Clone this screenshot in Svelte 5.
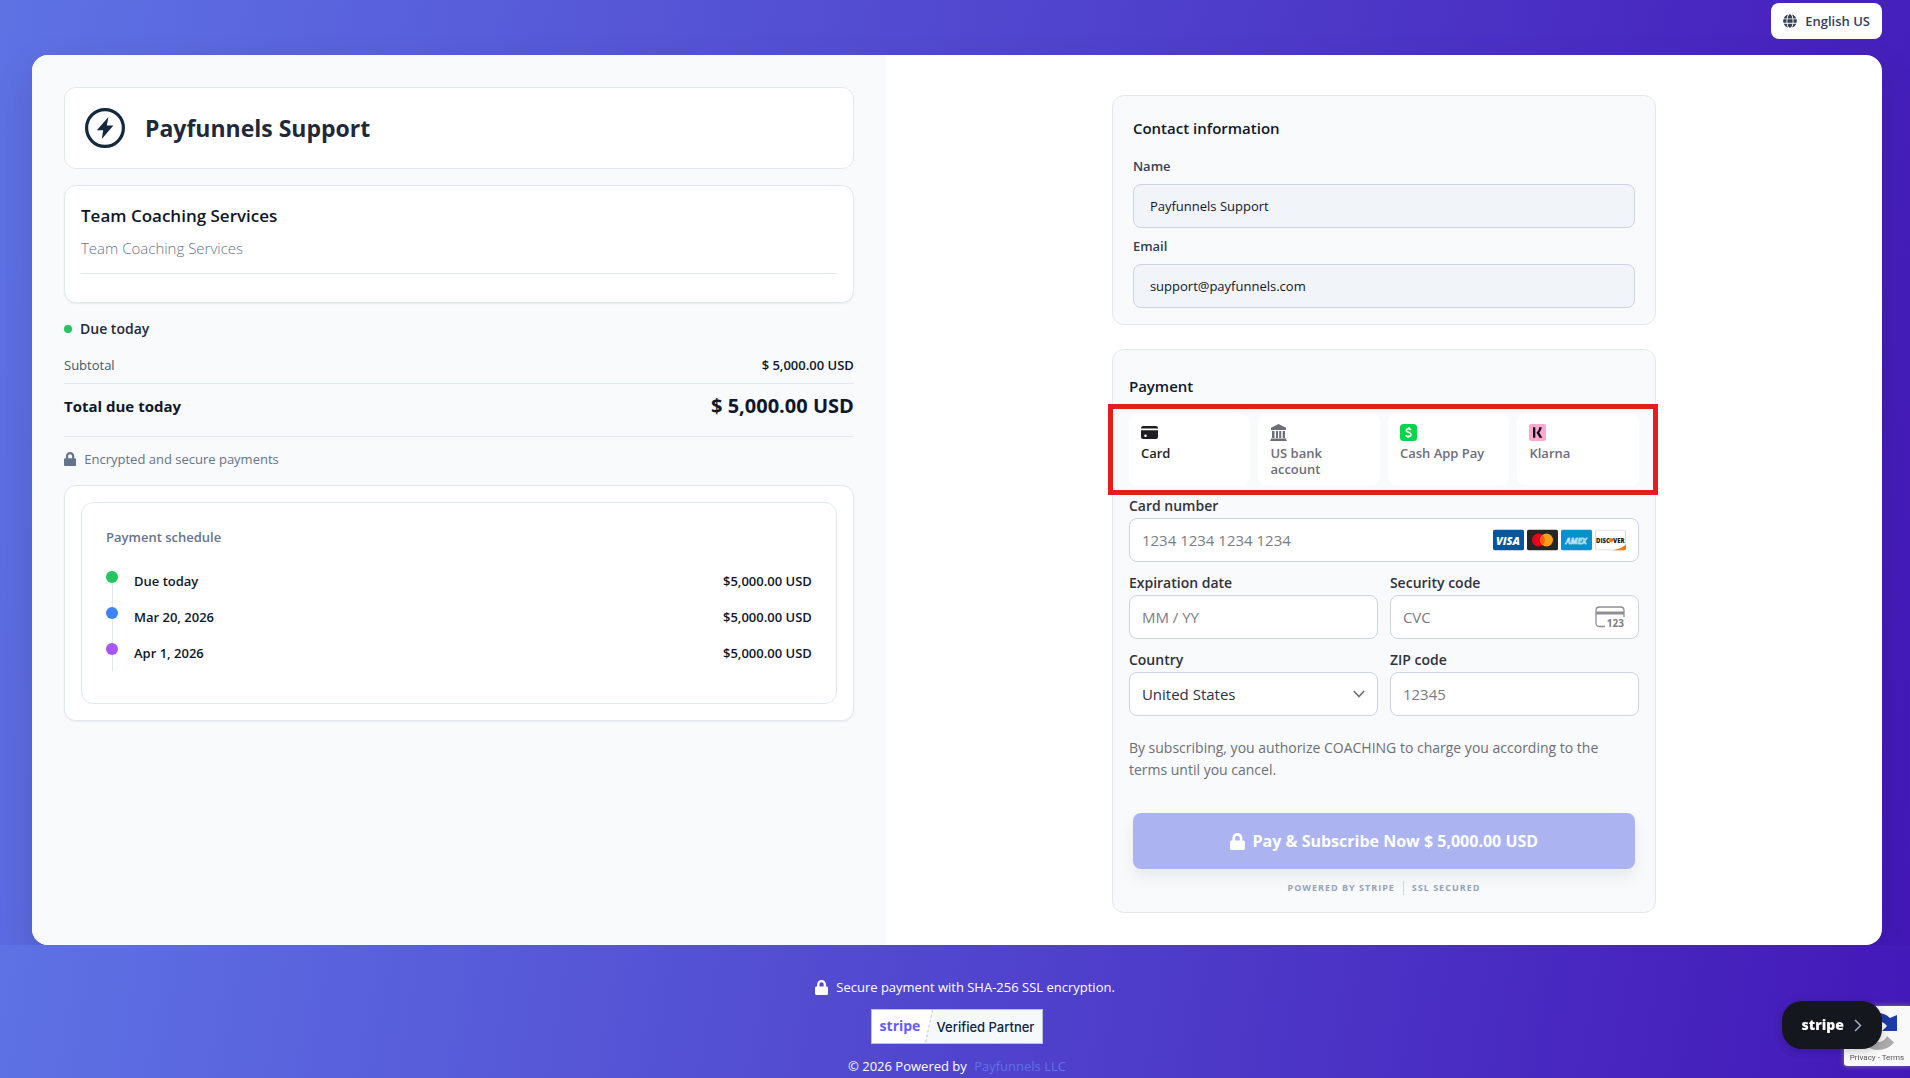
<script lang="ts">
  interface Installment {
    label: string;
    amount: string;
    tone: "green" | "blue" | "purple";
  }

  const schedule: Installment[] = [
    { label: "Due today", amount: "$5,000.00 USD", tone: "green" },
    { label: "Mar 20, 2026", amount: "$5,000.00 USD", tone: "blue" },
    { label: "Apr 1, 2026", amount: "$5,000.00 USD", tone: "purple" },
  ];

  const methods = [
    { id: "card", label: "Card" },
    { id: "bank", label: "US bank account" },
    { id: "cashapp", label: "Cash App Pay" },
    { id: "klarna", label: "Klarna" },
  ];

  let selected = $state("card");
  let name = $state("Payfunnels Support");
  let email = $state("support@payfunnels.com");
  let country = $state("US");
</script>

{#snippet lock(size: number)}
  <svg class="lock" height={size} viewBox="0 0 448 512" fill="currentColor" aria-hidden="true">
    <path d="M400 224h-24v-72C376 68.2 307.8 0 224 0S72 68.2 72 152v72H48c-26.5 0-48 21.5-48 48v192c0 26.5 21.5 48 48 48h352c26.5 0 48-21.5 48-48V272c0-26.5-21.5-48-48-48zm-104 0H152v-72c0-39.7 32.3-72 72-72s72 32.3 72 72v72z" />
  </svg>
{/snippet}

<div class="page">
  <div class="top">
    <nav class="topbar">
      <button class="lang" type="button">
        <svg width="14" height="14" viewBox="0 0 496 512" fill="currentColor" aria-hidden="true">
          <path d="M336.5 160C322 70.7 287.8 8 248 8s-74 62.7-88.5 152h177zM152 256c0 22.2 1.2 43.5 3.3 64h185.3c2.1-20.5 3.3-41.8 3.3-64s-1.2-43.5-3.3-64H155.3c-2.1 20.5-3.3 41.8-3.3 64zm324.7-96c-28.6-67.9-86.5-120.4-158-141.6 24.4 33.8 41.2 84.7 50 141.6h108zM177.2 18.4C105.8 39.6 47.8 92.1 19.3 160h108c8.7-56.9 25.5-107.8 49.9-141.6zM487.4 192H372.7c2.1 21 3.3 42.5 3.3 64s-1.2 43-3.3 64h114.6c5.5-20.5 8.6-41.8 8.6-64s-3.1-43.5-8.5-64zM120 256c0-21.5 1.2-43 3.3-64H8.6C3.2 212.5 0 233.8 0 256s3.2 43.5 8.6 64h114.6c-2-21-3.2-42.5-3.2-64zm39.5 96c14.5 89.3 48.7 152 88.5 152s74-62.7 88.5-152h-177zm159.3 141.6c71.4-21.2 129.4-73.7 158-141.6h-108c-8.8 56.9-25.6 107.8-50 141.6zM19.3 352c28.6 67.9 86.5 120.4 158 141.6-24.4-33.8-41.2-84.7-50-141.6h-108z" />
        </svg>
        English US
      </button>
    </nav>

    <main class="checkout">
      <section class="summary">
        <header class="box brand">
          <svg width="40" height="40" viewBox="0 0 40 40" aria-hidden="true">
            <circle cx="20" cy="20" r="18.4" fill="none" stroke="#14293d" stroke-width="3.2" />
            <path d="M23.4 9 11.8 22.2h6.4L16.8 31 28.4 17.6h-6.6z" fill="#14293d" />
          </svg>
          <h1>Payfunnels Support</h1>
        </header>

        <div class="box product">
          <h2>Team Coaching Services</h2>
          <p>Team Coaching Services</p>
          <hr />
        </div>

        <div class="due"><span class="due-dot"></span>Due today</div>

        <div class="row subtotal">
          <span>Subtotal</span>
          <strong>$ 5,000.00 USD</strong>
        </div>
        <div class="row total">
          <span>Total due today</span>
          <strong>$ 5,000.00 USD</strong>
        </div>

        <p class="encrypted">{@render lock(14)} Encrypted and secure payments</p>

        <div class="box schedule">
          <div class="schedule-inner">
            <h3>Payment schedule</h3>
            <ol>
              {#each schedule as item}
                <li>
                  <span class="marker {item.tone}"></span>
                  <span class="when">{item.label}</span>
                  <span>{item.amount}</span>
                </li>
              {/each}
            </ol>
          </div>
        </div>
      </section>

      <section class="forms">
        <form class="panel contact">
          <h2>Contact information</h2>
          <label for="name">Name</label>
          <input id="name" type="text" bind:value={name} />
          <label for="email">Email</label>
          <input id="email" type="email" bind:value={email} />
        </form>

        <form class="panel payment">
          <h2>Payment</h2>

          <div class="methods">
            {#each methods as m}
              <button type="button" class="method" class:active={selected === m.id} onclick={() => (selected = m.id)}>
                <svg width="17" height="17" viewBox="0 0 17 17" aria-hidden="true">
                  {#if m.id === "card"}
                    <path d="M0 4.2Q0 2 2 2h13q2 0 2 2.2v.4H0z" fill="currentColor" />
                    <path fill-rule="evenodd" d="M0 6.2h17V13q0 2-2 2H2q-2 0-2-2zM4.5 10.4a1.3 1.3 0 1 0 0 2.6 1.3 1.3 0 0 0 0-2.6z" fill="currentColor" />
                  {:else if m.id === "bank"}
                    <path fill-rule="evenodd" d="M8.5 0 16 3.8V6H1V3.8zM2 7h2.5v7H2zm4 0h2v7H6zm3.2 0h2v7h-2zm3.5 0h2.3v7h-2.3zM1 14.5h15V15l1 2H0l1-2z" fill="currentColor" />
                  {:else if m.id === "cashapp"}
                    <rect width="17" height="17" rx="3.5" fill="#00d54b" />
                    <path d="M11 5.9Q9.9 4.9 8.5 4.9C7.1 4.9 6.3 5.6 6.3 6.5c0 2.3 4.7 1.3 4.7 3.9 0 1.3-1.2 2-2.5 2q-1.6 0-2.9-1.1M9.1 3.2 8.8 5M8.1 12.2l-.4 1.7" fill="none" stroke="#fff" stroke-width="1.7" />
                  {:else}
                    <rect width="17" height="17" rx="2" fill="#ffa8cd" />
                    <path d="M4 3.2h2.3v10.6H4zM10.2 3.2h2.4c0 2-.9 3.9-2.4 5.2l3.2 5.4h-2.8L7.4 8.5c1.8-1.3 2.8-3.2 2.8-5.3z" fill="#0b051d" />
                  {/if}
                </svg>
                <span>{m.label}</span>
              </button>
            {/each}
            <div class="highlight"></div>
          </div>

          <div class="fields">
            <div class="field wide">
              <label for="number">Card number</label>
              <div class="control">
                <input id="number" type="text" inputmode="numeric" placeholder="1234 1234 1234 1234" />
                <div class="adorn brands" aria-hidden="true">
                  <svg width="31" height="21" viewBox="0 0 31 21">
                    <rect width="31" height="21" rx="2" fill="#00579f" />
                    <text x="15" y="15" text-anchor="middle" font-size="11" font-weight="800" font-style="italic" fill="#fff">VISA</text>
                  </svg>
                  <svg width="31" height="21" viewBox="0 0 31 21">
                    <rect width="31" height="21" rx="2" fill="#252525" />
                    <circle cx="11.5" cy="10.5" r="6.5" fill="#eb001b" />
                    <circle cx="19.5" cy="10.5" r="6.5" fill="#f79e1b" />
                    <path d="M15.5 5.4a6.5 6.5 0 0 1 0 10.2 6.5 6.5 0 0 1 0-10.2z" fill="#ff5f00" />
                  </svg>
                  <svg width="31" height="21" viewBox="0 0 31 21">
                    <rect width="31" height="21" rx="2" fill="#0690d0" />
                    <text x="15" y="14" text-anchor="middle" font-size="8" font-weight="700" font-style="italic" fill="#7cc4e8" stroke="#fff" stroke-width=".4">AMEX</text>
                  </svg>
                  <svg width="31" height="21" viewBox="0 0 31 21">
                    <rect x=".5" y=".5" width="30" height="20" rx="2" fill="#fff" stroke="#dcdcdc" />
                    <path d="M17 21q9-1.5 14-6v4q0 2-2 2z" fill="#f27712" />
                    <text x="1" y="13" font-size="6" font-weight="800" fill="#1a1a1a">DISC</text>
                    <circle cx="16.2" cy="10.6" r="2.2" fill="#f27712" />
                    <text x="18" y="13" font-size="6" font-weight="800" fill="#1a1a1a">VER</text>
                  </svg>
                </div>
              </div>
            </div>

            <div class="field">
              <label for="expiry">Expiration date</label>
              <div class="control">
                <input id="expiry" type="text" inputmode="numeric" placeholder="MM / YY" />
              </div>
            </div>

            <div class="field">
              <label for="cvc">Security code</label>
              <div class="control">
                <input id="cvc" type="text" inputmode="numeric" placeholder="CVC" />
                <svg class="adorn" width="31" height="26" viewBox="0 0 31 26" aria-hidden="true">
                  <path d="M10 22.5H4.5Q1 22.5 1 19V6.5Q1 3 4.5 3h21Q29 3 29 6.5V13" fill="none" stroke="#8d8d96" stroke-width="1.3" />
                  <path d="M1 7.5h28v3H1z" fill="#8d8d96" />
                  <text x="29" y="23" text-anchor="end" font-size="10" font-weight="700" fill="#7d7d87">123</text>
                </svg>
              </div>
            </div>

            <div class="field">
              <label for="country">Country</label>
              <div class="control">
                <select id="country" bind:value={country}>
                  <option value="US">United States</option>
                  <option value="CA">Canada</option>
                  <option value="GB">United Kingdom</option>
                </select>
                <svg class="adorn" width="12" height="8" viewBox="0 0 12 8" aria-hidden="true">
                  <path d="M.8 1 6 6.6 11.2 1" fill="none" stroke="#6d6e78" stroke-width="1.6" />
                </svg>
              </div>
            </div>

            <div class="field">
              <label for="zip">ZIP code</label>
              <div class="control">
                <input id="zip" type="text" inputmode="numeric" placeholder="12345" />
              </div>
            </div>
          </div>

          <p class="terms">
            By subscribing, you authorize COACHING to charge you according to the terms until you cancel.
          </p>

          <button class="pay" type="button">{@render lock(17)} Pay &amp; Subscribe Now $ 5,000.00 USD</button>

          <div class="powered">
            <span>Powered by Stripe</span>
            <span>SSL Secured</span>
          </div>
        </form>
      </section>
    </main>
  </div>

  <footer>
    <p class="secure">{@render lock(15)} Secure payment with SHA-256 SSL encryption.</p>
    <div class="partner">
      <svg width="61" height="33" viewBox="0 0 61 33" aria-hidden="true">
        <path d="M0 0h61l-7 33H0z" fill="#fff" />
        <path d="M60.5 0l-7 33" fill="none" stroke="#b9c3de" stroke-dasharray="3 2" />
        <text x="28" y="21" text-anchor="middle" font-size="14" font-weight="700" fill="#635bff">stripe</text>
      </svg>
      <span>Verified Partner</span>
    </div>
    <p class="copyright">© 2026 Powered by <a href="#payfunnels">Payfunnels LLC</a></p>
  </footer>

  <div class="recaptcha">
    <svg width="40" height="40" viewBox="0 0 40 40" aria-hidden="true">
      <path d="M3 20Q4 3 20 2v8q-8 1-9 10z" fill="#4285f4" />
      <path d="M20 2q8 0 13 5l7-3v16H25l5-5q-4-5-10-5z" fill="#1c3aa9" />
      <path d="M30 25l7 6.5Q31 39 21 39 13 39 8 33l5-6q3 4 8 4 6 0 9-6z" fill="#ababab" />
    </svg>
    <span>Privacy - Terms</span>
  </div>

  <button class="stripe-pill" type="button">
    stripe
    <svg width="8" height="13" viewBox="0 0 8 13" aria-hidden="true">
      <path d="M1 1l5.5 5.5L1 12" fill="none" stroke="#a3acba" stroke-width="1.5" />
    </svg>
  </button>
</div>

<style>
  :global(body) {
    margin: 0;
  }
  .page {
    --line: #e2e8f0;
    --ink: #0f172a;
    --muted: #64748b;
    --backdrop: linear-gradient(100deg, #5e72e4, #4318b8);
    display: flex;
    flex-direction: column;
    min-height: 100vh;
    color: var(--ink);
    font-family: "Segoe UI", "Open Sans", "Noto Sans", sans-serif;
    font-size: 14px;
    line-height: 20px;
  }
  .page :global(*) {
    box-sizing: border-box;
  }
  h1,
  h2,
  h3,
  p,
  ol {
    margin: 0;
    padding: 0;
    font-weight: 600;
  }
  p {
    font-weight: 400;
  }
  button,
  input,
  select {
    font: inherit;
    color: inherit;
  }
  button {
    border: 0;
    cursor: pointer;
  }
  svg {
    flex: none;
    display: block;
  }

  .top {
    padding: 3px 28px 0 32px;
    background: var(--backdrop);
  }
  .topbar {
    display: flex;
    justify-content: flex-end;
  }
  .lang {
    display: flex;
    align-items: center;
    gap: 8px;
    height: 36px;
    padding: 0 12px;
    border-radius: 8px;
    background: #fff;
    color: #334155;
    font-size: 13px;
    font-weight: 600;
  }

  .checkout {
    display: grid;
    grid-template-columns: 6fr 7fr;
    margin-top: 16px;
    border-radius: 16px;
    overflow: hidden;
    background: #fff;
    box-shadow: 0 16px 40px rgba(0, 0, 0, 0.12);
  }
  .summary {
    padding: 32px;
    background: #f8fafc;
  }
  .box {
    border: 1px solid var(--line);
    border-radius: 12px;
    background: #fff;
  }
  .brand {
    display: flex;
    align-items: center;
    gap: 20px;
    padding: 20px;
  }
  h1 {
    color: #1e293b;
    font-size: 23px;
    font-weight: 700;
    line-height: 32px;
  }
  .product {
    margin-top: 16px;
    padding: 16px;
    box-shadow: 0 1px 2px rgba(15, 23, 42, 0.06);
  }
  .product h2 {
    font-size: 17px;
    line-height: 28px;
  }
  .product p {
    margin-top: 4px;
    color: var(--muted);
    font-size: 15px;
    font-weight: 300;
    line-height: 28px;
  }
  hr {
    margin: 11px 0 12px;
    border: 0;
    border-top: 1px solid var(--line);
  }
  .due {
    display: flex;
    align-items: center;
    gap: 8px;
    margin-top: 16px;
    color: #1e293b;
    font-weight: 600;
  }
  .due-dot {
    width: 8px;
    height: 8px;
    border-radius: 50%;
    background: #22c55e;
  }
  .row {
    display: flex;
    align-items: center;
    justify-content: space-between;
    border-bottom: 1px solid var(--line);
  }
  .subtotal {
    margin-top: 16px;
    padding-bottom: 8px;
    color: #475569;
    font-size: 13px;
  }
  .subtotal strong {
    color: var(--ink);
    font-weight: 600;
  }
  .total {
    padding: 8px 0 16px;
    font-size: 15px;
    font-weight: 700;
    line-height: 28px;
  }
  .total strong {
    font-size: 20px;
    font-weight: 700;
  }
  .encrypted {
    display: flex;
    align-items: center;
    gap: 8px;
    margin: 12px 0 16px;
    color: var(--muted);
    font-size: 13px;
  }
  .schedule {
    padding: 16px;
    box-shadow: 0 1px 2px rgba(15, 23, 42, 0.06);
  }
  .schedule-inner {
    padding: 24px 24px 32px;
    border: 1px solid var(--line);
    border-radius: 12px;
    font-size: 13px;
  }
  h3 {
    color: var(--muted);
    font-size: 13px;
  }
  ol {
    margin-top: 16px;
    list-style: none;
  }
  li {
    display: flex;
    align-items: center;
    gap: 16px;
    height: 36px;
    font-weight: 600;
  }
  .marker {
    align-self: stretch;
    width: 12px;
    padding-top: 8px;
    background: linear-gradient(var(--line), var(--line)) 6px 0 / 1px 100% no-repeat;
  }
  li:first-child .marker {
    background-position: 6px 8px;
    background-size: 1px 28px;
  }
  .marker::before {
    content: "";
    display: block;
    height: 12px;
    border-radius: 50%;
    background: var(--tone);
  }
  .green {
    --tone: #22c55e;
  }
  .blue {
    --tone: #3b82f6;
  }
  .purple {
    --tone: #a855f7;
  }
  .when {
    flex: 1;
  }

  .forms {
    display: flex;
    flex-direction: column;
    align-items: center;
    gap: 24px;
    padding: 40px 32px 32px;
  }
  .panel {
    width: 100%;
    max-width: 544px;
    border: 1px solid #e5e7eb;
    border-radius: 12px;
    background: #f8fafc;
  }
  .panel h2 {
    font-size: 15px;
    line-height: 24px;
  }
  .contact {
    padding: 20px 20px 16px;
  }
  .contact h2 {
    margin-bottom: 16px;
  }
  .contact label {
    display: block;
    margin-top: 8px;
    color: #334155;
    font-size: 13px;
    font-weight: 600;
  }
  .contact input {
    display: block;
    width: 100%;
    height: 44px;
    margin-top: 8px;
    padding: 0 16px;
    border: 1px solid #cbd5e1;
    border-radius: 8px;
    background: #f1f5f9;
    font-size: 13px;
  }

  .payment {
    padding: 24px 16px 17px;
  }
  .methods {
    position: relative;
    display: grid;
    grid-template-columns: repeat(4, 1fr);
    gap: 8px;
    margin-top: 16px;
  }
  .method {
    display: flex;
    flex-direction: column;
    align-items: flex-start;
    gap: 4px;
    height: 71px;
    padding: 10px 12px;
    border-radius: 8px;
    background: #fff;
    color: #6d6e78;
    font-size: 13px;
    font-weight: 600;
    line-height: 16px;
    text-align: left;
  }
  .method.active {
    color: #1f1f23;
  }
  .highlight {
    position: absolute;
    inset: -10px -19px -10px -21px;
    border: 5px solid #e81c1c;
    pointer-events: none;
  }
  .fields {
    display: grid;
    grid-template-columns: 1fr 1fr;
    gap: 12px;
    margin-top: 12px;
  }
  .wide {
    grid-column: 1 / -1;
  }
  .field label {
    display: block;
    margin-bottom: 3px;
    color: #30313d;
    font-size: 14px;
    font-weight: 600;
    line-height: 18px;
  }
  .control {
    position: relative;
  }
  .control input,
  .control select {
    display: block;
    width: 100%;
    height: 44px;
    padding: 0 12px;
    border: 1px solid #cbd5e1;
    border-radius: 8px;
    background: #fff;
    color: #30313d;
    font-size: 15px;
    appearance: none;
  }
  .control input::placeholder {
    color: #7b7c84;
  }
  .adorn {
    position: absolute;
    top: 50%;
    right: 13px;
    transform: translateY(-50%);
    pointer-events: none;
  }
  .brands {
    display: flex;
    gap: 3px;
  }
  .terms {
    margin-top: 21px;
    color: #6d6e78;
    line-height: 22px;
  }
  .pay {
    display: flex;
    align-items: center;
    justify-content: center;
    gap: 8px;
    width: calc(100% - 8px);
    height: 56px;
    margin: 32px 4px 12px;
    border-radius: 8px;
    background: #abb4f1;
    box-shadow: 0 8px 16px rgba(15, 23, 42, 0.07);
    color: #fff;
    font-size: 16px;
    font-weight: 700;
  }
  .powered {
    display: flex;
    justify-content: center;
    color: #94a3b8;
    font-size: 9px;
    font-weight: 700;
    letter-spacing: 1px;
    line-height: 14px;
    text-transform: uppercase;
  }
  .powered span + span {
    margin-left: 8px;
    padding-left: 8px;
    border-left: 1px solid #cbd5e1;
  }

  footer {
    flex: 1;
    display: flex;
    flex-direction: column;
    align-items: center;
    padding: 32px 28px 0 32px;
    background: var(--backdrop);
    color: #fff;
  }
  .secure {
    display: flex;
    align-items: center;
    gap: 8px;
    padding-left: 16px;
    font-size: 13px;
  }
  .partner {
    display: flex;
    align-items: center;
    margin: 12px 0;
    padding-right: 8px;
    border: 1px solid #b9c3de;
    background: #f6f9fc;
    color: #0a2540;
    font-family: Inter, sans-serif;
    font-size: 13px;
    font-weight: 500;
  }
  .partner span {
    padding-left: 4px;
  }
  .partner text,
  .stripe-pill {
    font-family: "Open Sans", sans-serif;
  }
  .copyright {
    font-size: 13px;
  }
  .copyright a {
    margin-left: 4px;
    color: #5e72e4;
    text-decoration: none;
  }

  .recaptcha {
    position: fixed;
    right: 0;
    bottom: 12px;
    display: flex;
    flex-direction: column;
    align-items: center;
    width: 66px;
    height: 60px;
    padding-top: 5px;
    border-radius: 3px 0 0 3px;
    background: #f9f9f9;
    box-shadow: 0 0 5px gray;
    color: #555;
    font-family: Roboto, sans-serif;
    font-size: 8px;
    line-height: 14px;
    white-space: nowrap;
  }
  .stripe-pill {
    position: fixed;
    right: 28px;
    bottom: 29px;
    display: flex;
    align-items: center;
    gap: 10px;
    height: 48px;
    padding: 0 20px;
    border-radius: 20px;
    background: #14171d;
    box-shadow: 0 2px 8px rgba(0, 0, 0, 0.2);
    color: #fff;
    font-size: 14px;
    font-weight: 800;
  }
</style>
